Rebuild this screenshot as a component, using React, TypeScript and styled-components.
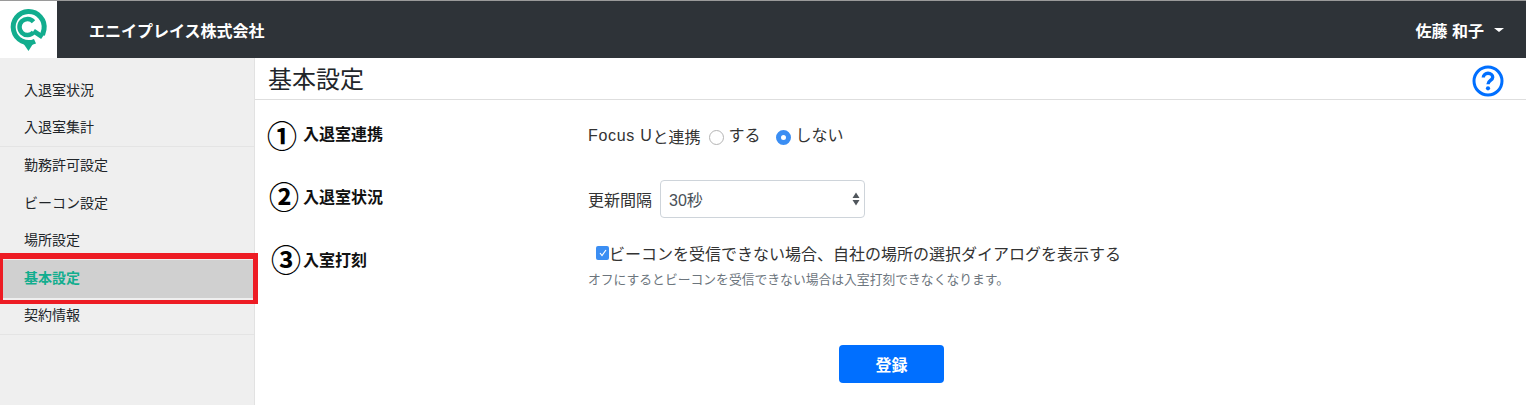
import React from "react";
import styled, { createGlobalStyle } from "styled-components";

const Global = createGlobalStyle`
  html, body { margin: 0; padding: 0; background: #fff; }
  body { font-family: "Liberation Sans", "Noto Sans CJK JP", sans-serif; color: #212529; }
`;

const Page = styled.div`
  width: 1526px;
  height: 405px;
  display: flex;
  flex-direction: column;
  overflow: hidden;
  position: relative;
`;

const Header = styled.header`
  height: 58px;
  box-sizing: border-box;
  border-top: 1px solid #9a9a9a;
  background: #2e3338;
  display: flex;
  align-items: center;
  color: #fff;
  font-weight: 700;
  font-size: 16px;
`;

const LogoBox = styled.div`
  width: 57px;
  height: 57px;
  background: #fff;
  display: flex;
`;

const Company = styled.div`
  margin-left: 32px;
  flex: 1;
`;

const User = styled.div`
  display: flex;
  align-items: center;
  gap: 10px;
  margin-right: 22px;
`;

const Caret = styled.span`
  width: 0;
  height: 0;
  border-left: 5px solid transparent;
  border-right: 5px solid transparent;
  border-top: 4px solid #fff;
`;

const Body = styled.div`
  flex: 1;
  display: flex;
`;

const Sidebar = styled.nav`
  width: 255px;
  box-sizing: border-box;
  background: #efefef;
  border-right: 1px solid #e2e2e2;
  padding-top: 14px;
`;

const NavItem = styled.div<{ $active?: boolean; $divider?: boolean }>`
  height: 37.6px;
  box-sizing: border-box;
  display: flex;
  align-items: center;
  padding: 0 0 4px 24px;
  font-size: 14px;
  color: ${(p) => (p.$active ? "#12ad8e" : "#212529")};
  font-weight: ${(p) => (p.$active ? 700 : 400)};
  background: ${(p) => (p.$active ? "#d0d0d0" : "transparent")};
  border-bottom: ${(p) => (p.$divider ? "1px solid #e4e4e4" : "none")};
`;

const RedFrame = styled.div`
  position: absolute;
  left: 0;
  top: 253px;
  width: 258px;
  height: 51px;
  box-sizing: border-box;
  border-style: solid;
  border-color: #ed1c24;
  border-width: 6px 5px 4px 3px;
  pointer-events: none;
`;

const Main = styled.main`
  flex: 1;
  display: flex;
  flex-direction: column;
`;

const TitleBar = styled.div`
  height: 42px;
  box-sizing: border-box;
  border-bottom: 1px solid #dedede;
  display: flex;
  align-items: center;
  justify-content: space-between;
  padding: 0 22px 0 13px;
`;

const Title = styled.h1`
  margin: 2px 0 0;
  font-size: 24px;
  font-weight: 400;
  color: #212529;
  line-height: 1;
`;

const HelpIcon = styled.svg`
  width: 32px;
  height: 32px;
  margin-top: 5px;
`;

const Rows = styled.div`
  display: flex;
  flex-direction: column;
  padding: 17px 0 0 13px;
`;

const Row = styled.section<{ $h: number }>`
  display: grid;
  grid-template-columns: 320px 1fr;
  height: ${(p) => p.$h}px;
`;

const Heading = styled.div`
  display: grid;
  grid-template-columns: 35px 1fr;
  align-items: start;
  font-size: 16px;
  font-weight: 700;
  color: #111;
`;

const Circled = styled.span<{ $shift: number; $lift: number }>`
  font-size: 30px;
  font-weight: 700;
  line-height: 36px;
  color: #000;
  font-family: "Noto Sans CJK JP", sans-serif;
  margin: ${(p) => p.$lift}px 0 0 ${(p) => p.$shift}px;
`;

const HeadingText = styled.span`
  line-height: 36px;
`;

const Control = styled.div<{ $top?: number }>`
  font-size: 16px;
  color: #333;
  display: flex;
  flex-wrap: wrap;
  align-items: center;
  align-content: flex-start;
  min-height: 36px;
  padding-top: ${(p) => p.$top ?? 0}px;
`;

const Radio = styled.span<{ $on?: boolean }>`
  width: 15px;
  height: 15px;
  border-radius: 50%;
  box-sizing: border-box;
  margin: 2px 5px 0 8px;
  background: #fff;
  border: ${(p) => (p.$on ? "5px solid #3b8ef3" : "1px solid #b4b4b4")};
`;

const RadioLabel = styled.span`
  margin-right: 7px;
  margin-top: -4px;
`;

const BrandName = styled.span`
  letter-spacing: 0.7px;
`;

const SelectBox = styled.div`
  margin-left: 8px;
  width: 205px;
  height: 38px;
  box-sizing: border-box;
  border: 1px solid #ced4da;
  border-radius: 4px;
  display: flex;
  align-items: center;
  justify-content: space-between;
  padding: 0 3px 0 8px;
  color: #495057;
`;

const CheckRow = styled.div`
  display: flex;
  align-items: center;
  width: 100%;
  padding-left: 8px;
  height: 22px;
  margin-top: -1px;
`;

const CheckBox = styled.span`
  width: 13px;
  height: 14px;
  background: #3b8ef3;
  border-radius: 2px;
  display: flex;
  align-items: center;
  justify-content: center;
`;

const Hint = styled.div`
  width: 100%;
  font-size: 12.8px;
  color: #6c757d;
  margin-top: 5px;
`;

const Footer = styled.div`
  display: flex;
  padding-left: 584px;
  margin-top: 17px;
`;

const Submit = styled.button`
  width: 105px;
  height: 38px;
  border: none;
  border-radius: 4px;
  background: #006fff;
  color: #fff;
  font-family: inherit;
  font-size: 16px;
  font-weight: 700;
`;

export default function App() {
  return (
    <Page>
      <Global />
      <Header>
        <LogoBox>
          <svg width="57" height="57" viewBox="0 0 57 57" fill="none">
            <path d="M35 40.2A15.5 15.5 0 1 1 44 28.5L42.5 34" stroke="#12ad8e" strokeWidth="5" />
            <path d="M42.5 36L33.5 30" stroke="#12ad8e" strokeWidth="5" />
            <path d="M33.5 20.7A8 8 0 1 0 33.5 31.3" stroke="#12ad8e" strokeWidth="4.5" />
            <path d="M23 42L28.5 50L33.5 42Z" fill="#12ad8e" />
          </svg>
        </LogoBox>
        <Company>エニイプレイス株式会社</Company>
        <User>
          佐藤 和子
          <Caret />
        </User>
      </Header>
      <Body>
        <Sidebar>
          <NavItem>入退室状況</NavItem>
          <NavItem $divider>入退室集計</NavItem>
          <NavItem>勤務許可設定</NavItem>
          <NavItem>ビーコン設定</NavItem>
          <NavItem>場所設定</NavItem>
          <NavItem $active>基本設定</NavItem>
          <NavItem $divider>契約情報</NavItem>
        </Sidebar>
        <Main>
          <TitleBar>
            <Title>基本設定</Title>
            <HelpIcon viewBox="0 0 32 32" fill="none">
              <circle cx="16" cy="16" r="14" stroke="#006fff" strokeWidth="3" />
              <path d="M11.3 12.5C11.3 10 13.5 8.3 16 8.3C18.7 8.3 20.7 10 20.7 12.3C20.7 15.5 16 15.5 16 19.2" stroke="#006fff" strokeWidth="3.4" />
              <circle cx="16" cy="23.3" r="2.1" fill="#006fff" />
            </HelpIcon>
          </TitleBar>
          <Rows>
            <Row $h={63}>
              <Heading>
                <Circled $shift={-1} $lift={-1}>①</Circled>
                <HeadingText>入退室連携</HeadingText>
              </Heading>
              <Control $top={7}>
                <BrandName>Focus U</BrandName>と連携
                <Radio />
                <RadioLabel>する</RadioLabel>
                <Radio $on />
                <RadioLabel>しない</RadioLabel>
              </Control>
            </Row>
            <Row $h={63}>
              <Heading>
                <Circled $shift={1} $lift={-3}>②</Circled>
                <HeadingText>入退室状況</HeadingText>
              </Heading>
              <Control>
                更新間隔
                <SelectBox>
                  30秒
                  <svg width="10" height="16" viewBox="0 0 10 16">
                    <path d="M5 1.5L8.5 7H1.5Z M5 14.5L8.5 9H1.5Z" fill="#50565c" />
                  </svg>
                </SelectBox>
              </Control>
            </Row>
            <Row $h={85}>
              <Heading>
                <Circled $shift={3} $lift={-3}>③</Circled>
                <HeadingText>入室打刻</HeadingText>
              </Heading>
              <Control>
                <CheckRow>
                  <CheckBox>
                    <svg width="10" height="10" viewBox="0 0 10 10" fill="none">
                      <path d="M2 5L4 7.5L8 2" stroke="#fff" strokeWidth="1.2" />
                    </svg>
                  </CheckBox>
                  ビーコンを受信できない場合、自社の場所の選択ダイアログを表示する
                </CheckRow>
                <Hint>オフにするとビーコンを受信できない場合は入室打刻できなくなります。</Hint>
              </Control>
            </Row>
          </Rows>
          <Footer>
            <Submit>登録</Submit>
          </Footer>
        </Main>
      </Body>
      <RedFrame />
    </Page>
  );
}
